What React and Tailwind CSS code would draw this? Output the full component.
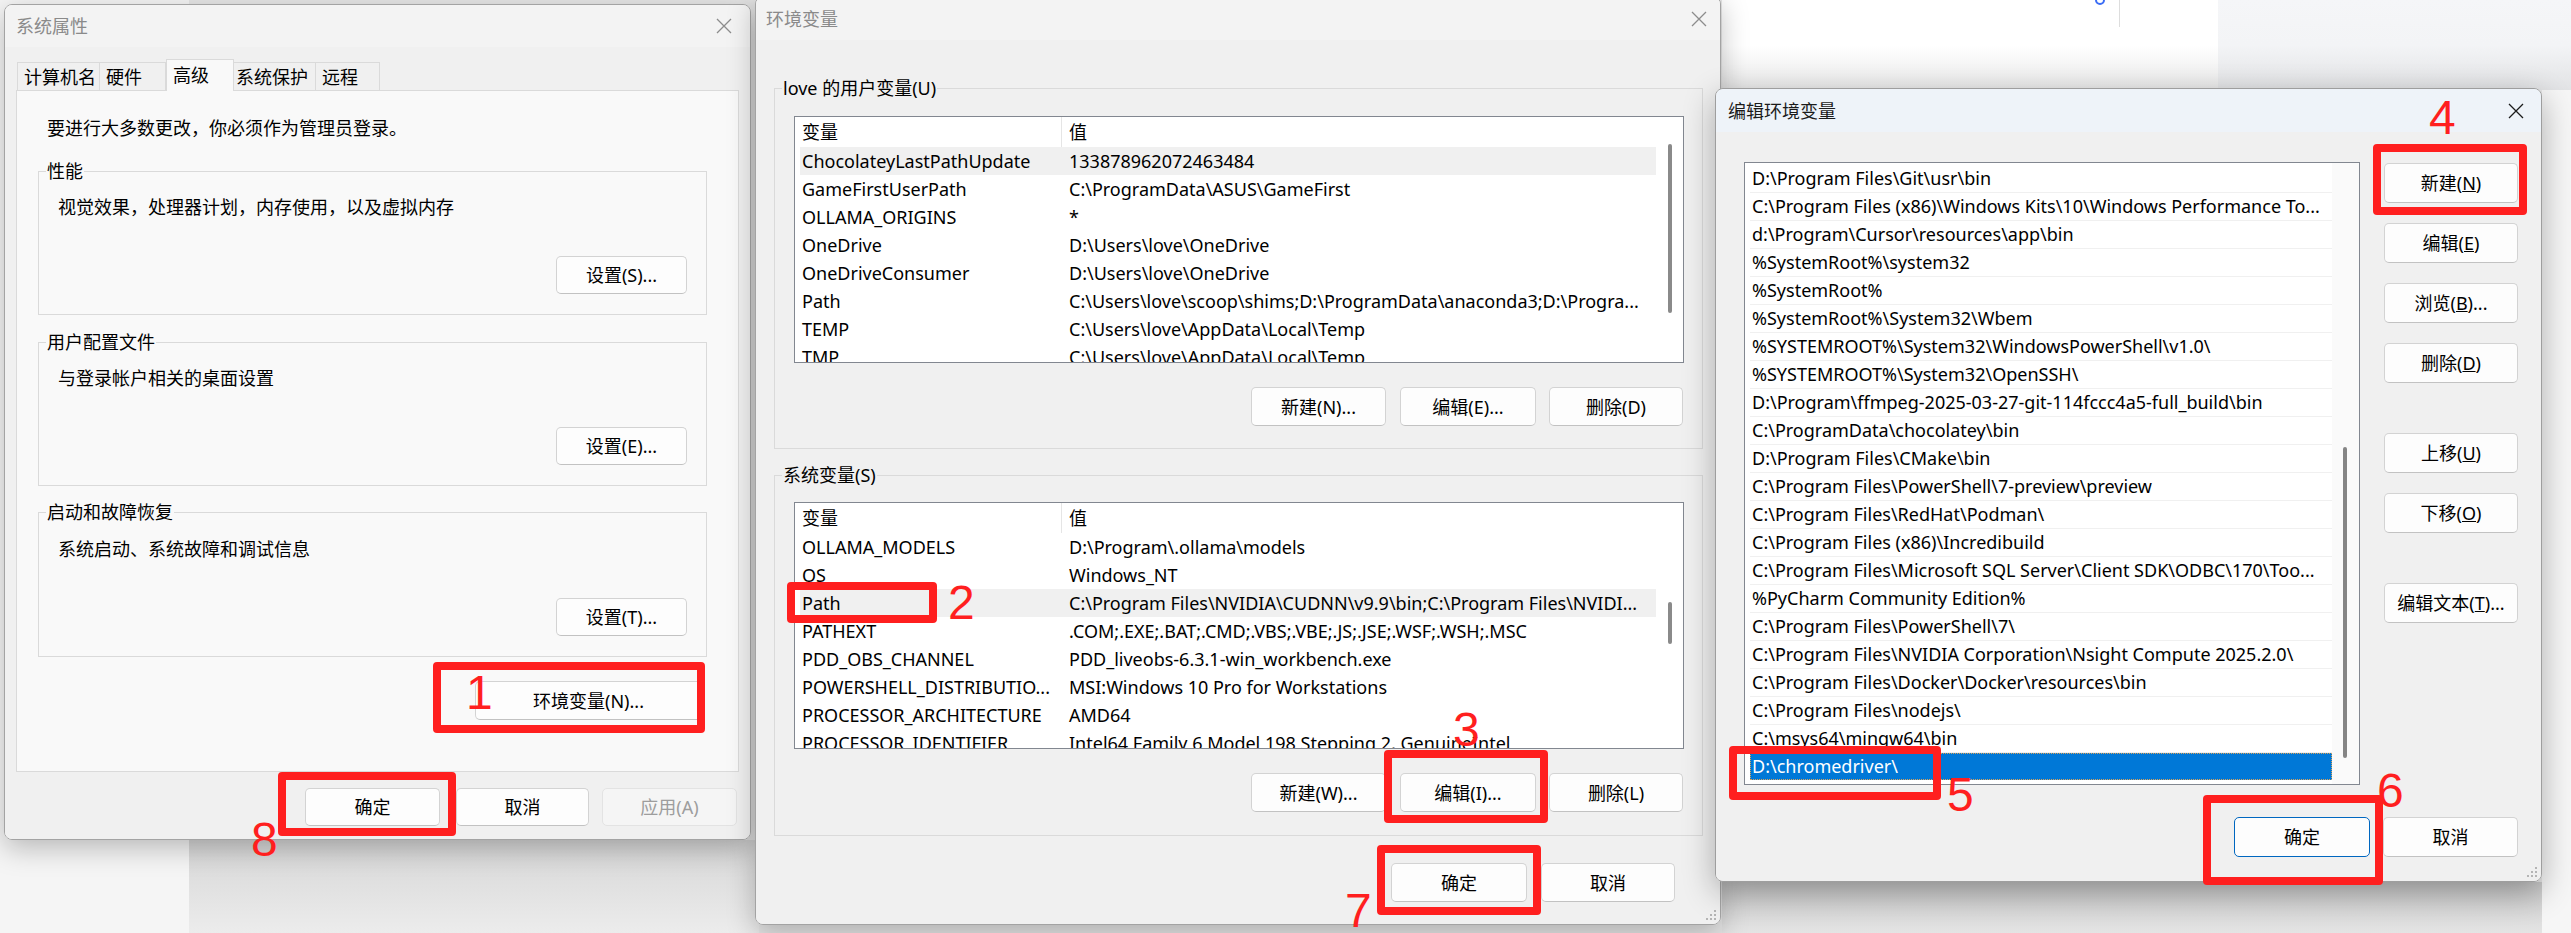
import React from "react";

const userVars = [
	["ChocolateyLastPathUpdate", "133878962072463484"],
	["GameFirstUserPath", "C:\\ProgramData\\ASUS\\GameFirst"],
	["OLLAMA_ORIGINS", "*"],
	["OneDrive", "D:\\Users\\love\\OneDrive"],
	["OneDriveConsumer", "D:\\Users\\love\\OneDrive"],
	["Path", "C:\\Users\\love\\scoop\\shims;D:\\ProgramData\\anaconda3;D:\\Progra..."],
	["TEMP", "C:\\Users\\love\\AppData\\Local\\Temp"],
	["TMP", "C:\\Users\\love\\AppData\\Local\\Temp"],
];

const sysVars = [
	["OLLAMA_MODELS", "D:\\Program\\.ollama\\models"],
	["OS", "Windows_NT"],
	["Path", "C:\\Program Files\\NVIDIA\\CUDNN\\v9.9\\bin;C:\\Program Files\\NVIDI..."],
	["PATHEXT", ".COM;.EXE;.BAT;.CMD;.VBS;.VBE;.JS;.JSE;.WSF;.WSH;.MSC"],
	["PDD_OBS_CHANNEL", "PDD_liveobs-6.3.1-win_workbench.exe"],
	["POWERSHELL_DISTRIBUTIO...", "MSI:Windows 10 Pro for Workstations"],
	["PROCESSOR_ARCHITECTURE", "AMD64"],
	["PROCESSOR_IDENTIFIER", "Intel64 Family 6 Model 198 Stepping 2, GenuineIntel"],
];

const paths = [
	"D:\\Program Files\\Git\\usr\\bin",
	"C:\\Program Files (x86)\\Windows Kits\\10\\Windows Performance To...",
	"d:\\Program\\Cursor\\resources\\app\\bin",
	"%SystemRoot%\\system32",
	"%SystemRoot%",
	"%SystemRoot%\\System32\\Wbem",
	"%SYSTEMROOT%\\System32\\WindowsPowerShell\\v1.0\\",
	"%SYSTEMROOT%\\System32\\OpenSSH\\",
	"D:\\Program\\ffmpeg-2025-03-27-git-114fccc4a5-full_build\\bin",
	"C:\\ProgramData\\chocolatey\\bin",
	"D:\\Program Files\\CMake\\bin",
	"C:\\Program Files\\PowerShell\\7-preview\\preview",
	"C:\\Program Files\\RedHat\\Podman\\",
	"C:\\Program Files (x86)\\Incredibuild",
	"C:\\Program Files\\Microsoft SQL Server\\Client SDK\\ODBC\\170\\Too...",
	"%PyCharm Community Edition%",
	"C:\\Program Files\\PowerShell\\7\\",
	"C:\\Program Files\\NVIDIA Corporation\\Nsight Compute 2025.2.0\\",
	"C:\\Program Files\\Docker\\Docker\\resources\\bin",
	"C:\\Program Files\\nodejs\\",
	"C:\\msys64\\mingw64\\bin",
	"D:\\chromedriver\\",
];

// red annotation boxes drawn over the screenshot
const marks = [
	{ box: "left-[433px] top-[662px] w-[272px] h-[71px]", n: "1", at: "left-[466px] top-[669px]" },
	{ box: "left-[787px] top-[582px] w-[150px] h-[41px]", n: "2", at: "left-[948px] top-[579px]" },
	{ box: "left-[1384px] top-[750px] w-[164px] h-[73px]", n: "3", at: "left-[1453px] top-[706px]" },
	{ box: "left-[2373px] top-[144px] w-[154px] h-[71px]", n: "4", at: "left-[2429px] top-[94px]" },
	{ box: "left-[1729px] top-[746px] w-[212px] h-[54px]", n: "5", at: "left-[1947px] top-[771px]" },
	{ box: "left-[2203px] top-[795px] w-[180px] h-[90px]", n: "6", at: "left-[2377px] top-[767px]" },
	{ box: "left-[1377px] top-[845px] w-[164px] h-[70px]", n: "7", at: "left-[1345px] top-[887px]" },
	{ box: "left-[278px] top-[772px] w-[178px] h-[64px]", n: "8", at: "left-[251px] top-[816px]" },
];

const CloseX = ({ active }) => (
	<svg width="16" height="16" viewBox="0 0 16 16" className={active ? "text-[#1b1b1b]" : "text-[#8c8c8c]"}>
		<path d="M1 1L15 15M15 1L1 15" stroke="currentColor" strokeWidth="1.3" fill="none" />
	</svg>
);

const Grip = () => (
	<svg width="10" height="10" viewBox="0 0 10 10" className="absolute right-[4px] bottom-[4px] text-[#b5b5b5]">
		<rect x="8" y="0" width="2" height="2" fill="currentColor" />
		<rect x="4" y="4" width="2" height="2" fill="currentColor" />
		<rect x="8" y="4" width="2" height="2" fill="currentColor" />
		<rect x="0" y="8" width="2" height="2" fill="currentColor" />
		<rect x="4" y="8" width="2" height="2" fill="currentColor" />
		<rect x="8" y="8" width="2" height="2" fill="currentColor" />
	</svg>
);

const Btn = ({ children, className = "", disabled, primary }) => (
	<div
		className={
			"flex items-center justify-center rounded-[5px] border leading-none " +
			(disabled
				? "bg-[#f5f5f5] border-[#e3e3e3] text-[#9d9d9d] "
				: primary
				? "bg-[#fdfdfd] border-[#0067c0] text-black "
				: "bg-[#fdfdfd] border-[#d3d3d3] border-b-[#c2c2c2] text-black ") +
			className
		}
	>
		{children}
	</div>
);

const TitleBar = ({ title, active, className, pad }) => (
	<div className={"flex items-center justify-between " + className}>
		<span className={"leading-[24px] " + pad + (active ? " text-[#1b1b1b]" : " text-[#8a8a8a]")}>{title}</span>
		<CloseX active={active} />
	</div>
);

const Group = ({ label, className, bg, children }) => (
	<div className={"relative border border-[#dadada] " + className}>
		<span className={"absolute -top-[13px] left-[7px] px-[1px] leading-[24px] " + bg}>{label}</span>
		{children}
	</div>
);

const VarList = ({ rows, selected, thumb }) => (
	<div className="flex h-[247px] border border-[#828790] bg-white overflow-hidden">
		<div className="flex-1 pl-[5px] overflow-hidden">
			<div className="flex h-[30px] items-center">
				<div className="w-[262px] h-full pl-[2px] flex items-center border-r border-[#e5e5e5]">变量</div>
				<div className="pl-[7px]">值</div>
			</div>
			{rows.map(([k, v], i) => (
				<div key={i} className={"flex h-[28px] items-center whitespace-nowrap " + (i === selected ? "bg-[#f0f0f0]" : "")}>
					<div className="w-[262px] pl-[2px] overflow-hidden">{k}</div>
					<div className="flex-1 pl-[7px] overflow-hidden">{v}</div>
				</div>
			))}
		</div>
		<div className="w-[27px] relative bg-white">
			<div className={"absolute left-[12px] w-[4px] rounded-full bg-[#8a8a8a] " + thumb} />
		</div>
	</div>
);

export default function App() {
	return (
		<div className="relative w-[2571px] h-[933px] overflow-hidden bg-[#e6e6e6] text-[18px] text-black font-['Noto_Sans','Noto_Sans_CJK_SC',sans-serif]">
			{/* desktop behind the dialogs */}
			<div className="absolute left-0 top-0 w-[189px] h-[933px] bg-[#f5f5f5]" />
			<div className="absolute left-[189px] top-[840px] w-[570px] h-[93px] bg-gradient-to-b from-[#d6d6d6] to-[#ececec]" />
			<div className="absolute left-[1722px] top-0 w-[496px] h-[90px] bg-gradient-to-b from-white via-white to-[#e9e9e9]" />
			<div className="absolute left-[2218px] top-0 w-[353px] h-[90px] bg-gradient-to-b from-[#f5f6f8] via-[#f3f4f6] to-[#e2e3e5]" />
			<div className="absolute left-[2542px] top-[90px] w-[29px] h-[843px] bg-[#f6f6f6]" />
			<div className="absolute left-[1722px] top-[882px] w-[820px] h-[51px] bg-gradient-to-b from-[#c9c9c9] to-[#e4e4e4]" />
			<div className="absolute left-[2119px] top-0 w-px h-[27px] bg-[#dddddd]" />
			<div className="absolute left-[2095px] -top-[6px] w-[10px] h-[11px] rounded-full border-2 border-[#3b6df5]" />

			{/* 系统属性 */}
			<div className="absolute left-[4px] top-[4px] w-[747px] h-[836px] flex flex-col rounded-[8px] border border-[#a3a3a3] overflow-hidden shadow-[0_8px_28px_rgba(0,0,0,0.25)]">
				<TitleBar title="系统属性" className="h-[42px] bg-[#f3f3f3] pr-[18px]" pad="pl-[11px]" />
				<div className="flex-1 flex flex-col bg-[#f0f0f0] px-[11px] pt-[12px]">
					<div className="flex items-end h-[31px] pl-[1px]">
						<div className="h-[28px] w-[83px] pl-[6px] border border-b-0 border-[#dadada] leading-[28px]">计算机名</div>
						<div className="h-[28px] w-[66px] pl-[6px] border-t border-r border-[#dadada] leading-[28px]">硬件</div>
						<div className="relative z-10 -mb-px h-[32px] w-[68px] pl-[6px] border border-b-0 border-[#dadada] bg-[#f9f9f9] leading-[30px]">高级</div>
						<div className="h-[28px] w-[82px] pl-[2px] border-t border-r border-[#dadada] leading-[28px]">系统保护</div>
						<div className="h-[28px] w-[64px] pl-[6px] border-t border-r border-[#dadada] leading-[28px]">远程</div>
					</div>
					<div className="h-[682px] border border-[#dadada] bg-[#f9f9f9] flex flex-col pl-[21px] pr-[31px] pt-[25px]">
						<div className="ml-[9px] leading-[24px]">要进行大多数更改，你必须作为管理员登录。</div>
						<Group label="性能" bg="bg-[#f9f9f9]" className="mt-[31px] h-[144px] flex flex-col pt-[23px] px-[19px] pb-[20px]">
							<div className="leading-[24px]">视觉效果，处理器计划，内存使用，以及虚拟内存</div>
							<Btn className="mt-auto self-end w-[131px] h-[38px]">设置(S)...</Btn>
						</Group>
						<Group label="用户配置文件" bg="bg-[#f9f9f9]" className="mt-[27px] h-[144px] flex flex-col pt-[23px] px-[19px] pb-[20px]">
							<div className="leading-[24px]">与登录帐户相关的桌面设置</div>
							<Btn className="mt-auto self-end w-[131px] h-[38px]">设置(E)...</Btn>
						</Group>
						<Group label="启动和故障恢复" bg="bg-[#f9f9f9]" className="mt-[26px] h-[145px] flex flex-col pt-[24px] px-[19px] pb-[20px]">
							<div className="leading-[24px]">系统启动、系统故障和调试信息</div>
							<Btn className="mt-auto self-end w-[131px] h-[38px]">设置(T)...</Btn>
						</Group>
						<Btn className="mt-[24px] self-end mr-[5px] w-[227px] h-[39px]">环境变量(N)...</Btn>
					</div>
					<div className="mt-[16px] flex justify-end mr-[2px]">
						<Btn className="w-[135px] h-[38px]">确定</Btn>
						<Btn className="ml-[16px] w-[133px] h-[38px]">取消</Btn>
						<Btn disabled className="ml-[13px] w-[135px] h-[38px]">应用(A)</Btn>
					</div>
				</div>
			</div>

			{/* 环境变量 */}
			<div className="absolute left-[755px] -top-[4px] w-[966px] h-[929px] flex flex-col rounded-[8px] border border-[#a3a3a3] overflow-hidden shadow-[0_8px_28px_rgba(0,0,0,0.25)]">
				<TitleBar title="环境变量" className="h-[43px] bg-[#f3f3f3] pr-[13px]" pad="pl-[10px]" />
				<div className="relative flex-1 flex flex-col bg-[#f0f0f0] pl-[18px] pr-[17px] pt-[48px]">
					<Group label="love 的用户变量(U)" bg="bg-[#f0f0f0]" className="h-[361px] pt-[27px] pl-[19px] pr-[18px]">
						<VarList rows={userVars} selected={0} thumb="top-[27px] h-[169px]" />
						<div className="mt-[24px] flex justify-end mr-[1px]">
							<Btn className="w-[135px] h-[39px]">新建(N)...</Btn>
							<Btn className="ml-[14px] w-[136px] h-[39px]">编辑(E)...</Btn>
							<Btn className="ml-[13px] w-[134px] h-[39px]">删除(D)</Btn>
						</div>
					</Group>
					<Group label="系统变量(S)" bg="bg-[#f0f0f0]" className="mt-[26px] h-[361px] pt-[26px] pl-[19px] pr-[18px]">
						<VarList rows={sysVars} selected={2} thumb="top-[99px] h-[42px]" />
						<div className="mt-[24px] flex justify-end mr-[1px]">
							<Btn className="w-[135px] h-[39px]">新建(W)...</Btn>
							<Btn className="ml-[14px] w-[136px] h-[39px]">编辑(I)...</Btn>
							<Btn className="ml-[13px] w-[134px] h-[39px]">删除(L)</Btn>
						</div>
					</Group>
					<div className="mt-[27px] flex justify-end mr-[28px]">
						<Btn className="w-[136px] h-[39px]">确定</Btn>
						<Btn className="ml-[14px] w-[134px] h-[39px]">取消</Btn>
					</div>
					<Grip />
				</div>
			</div>

			{/* 编辑环境变量 */}
			<div className="absolute left-[1715px] top-[88px] w-[827px] h-[794px] flex flex-col rounded-[8px] border border-[#9e9e9e] overflow-hidden shadow-[0_10px_32px_rgba(0,0,0,0.3)]">
				<TitleBar title="编辑环境变量" active className="h-[43px] bg-[#eef3f9] pr-[17px]" pad="pl-[12px]" />
				<div className="relative flex-1 flex flex-col bg-[#f0f0f0] pl-[28px] pr-[23px] pt-[30px]">
					<div className="flex">
						<div className="flex w-[616px] h-[623px] border border-[#828790] bg-white overflow-hidden">
							<div className="flex-1 ml-[5px] pt-[2px] overflow-hidden">
								{paths.map((p, i) =>
									i === paths.length - 1 ? (
										<div key={i} className="h-[27px] pl-[1px] flex items-center whitespace-nowrap bg-[#0078d7] text-white border border-dotted border-[#d9a25a]">
											{p}
										</div>
									) : (
										<div key={i} className="h-[28px] pl-[2px] flex items-center whitespace-nowrap overflow-hidden border-b border-[#f0f0f0]">
											{p}
										</div>
									)
								)}
							</div>
							<div className="w-[27px] relative bg-[#fafafa]">
								<div className="absolute left-[11px] top-[284px] w-[4px] h-[311px] rounded-full bg-[#858585]" />
							</div>
						</div>
						<div className="ml-[24px] flex flex-col pt-[1px]">
							<Btn className="w-[134px] h-[40px]">新建(<u>N</u>)</Btn>
							<Btn className="mt-[20px] w-[134px] h-[40px]">编辑(<u>E</u>)</Btn>
							<Btn className="mt-[20px] w-[134px] h-[40px]">浏览(<u>B</u>)...</Btn>
							<Btn className="mt-[20px] w-[134px] h-[40px]">删除(<u>D</u>)</Btn>
							<Btn className="mt-[50px] w-[134px] h-[40px]">上移(<u>U</u>)</Btn>
							<Btn className="mt-[20px] w-[134px] h-[40px]">下移(<u>O</u>)</Btn>
							<Btn className="mt-[50px] w-[134px] h-[40px]">编辑文本(<u>T</u>)...</Btn>
						</div>
					</div>
					<div className="mt-[32px] flex justify-end">
						<Btn primary className="w-[136px] h-[40px]">确定</Btn>
						<Btn className="ml-[13px] w-[135px] h-[40px]">取消</Btn>
					</div>
					<Grip />
				</div>
			</div>

			{/* annotations */}
			{marks.map((m, i) => (
				<React.Fragment key={i}>
					<div className={"absolute z-50 border-[8px] border-[#ff1f1f] rounded-[4px] " + m.box} />
					<div className={"absolute z-50 text-[48px] leading-none text-[#ff1f1f] font-['Liberation_Sans',sans-serif] " + m.at}>{m.n}</div>
				</React.Fragment>
			))}
		</div>
	);
}
